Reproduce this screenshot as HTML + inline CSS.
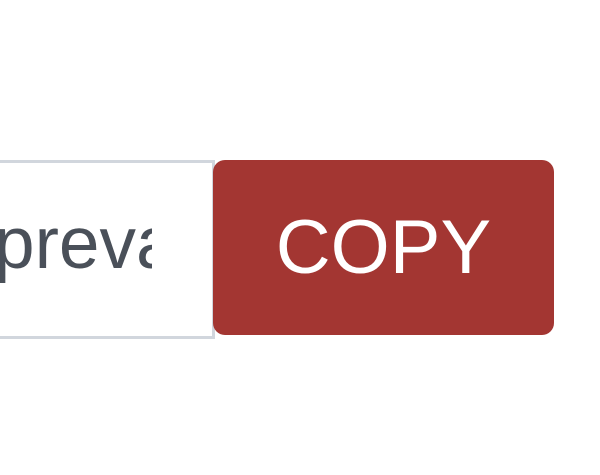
<!DOCTYPE html>
<html><head><style>
html,body{margin:0;padding:0;background:#fff;width:600px;height:475px;overflow:hidden;position:relative;font-family:"Liberation Sans",Arial,sans-serif}
.inp{position:absolute;left:-20px;top:160px;width:229px;height:173px;border:3px solid #d1d6dd;background:#fff}
.clip{position:absolute;left:0;top:184px;width:152px;height:120px;overflow:hidden}
.txt{position:absolute;left:-6px;top:0;font-size:73px;line-height:120px;color:#4a5059;white-space:nowrap}
.btn{position:absolute;left:213px;top:160px;width:341px;height:175px;background:#a33632;border-radius:12px;color:#fff;font-size:76px;text-align:center;line-height:175px}
</style></head><body>
<div class="inp"></div>
<div class="clip"><span class="txt">prevabbreviation</span></div>
<div class="btn">COPY</div>
</body></html>
